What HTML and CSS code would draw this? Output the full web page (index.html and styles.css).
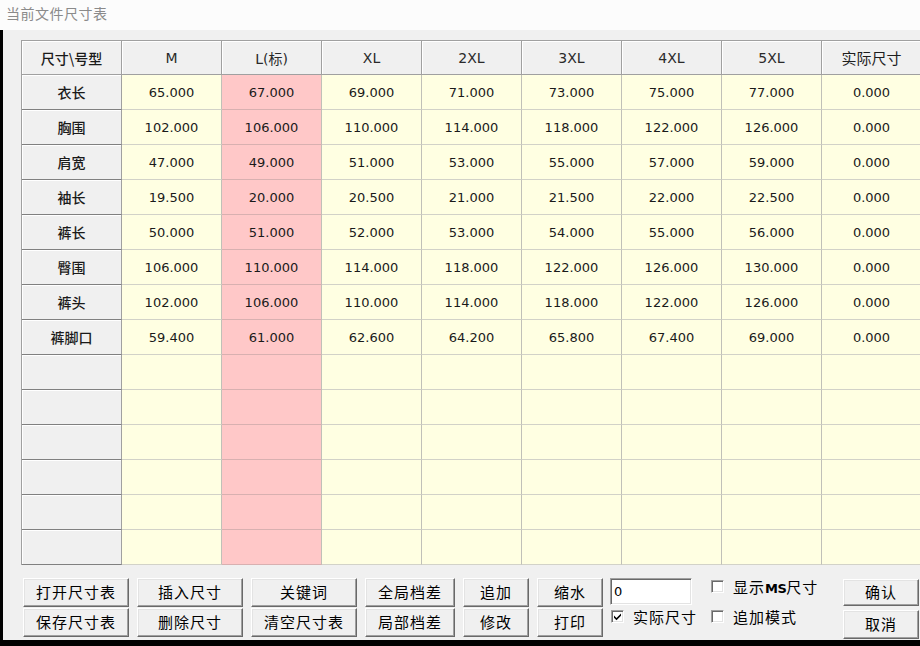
FILE: index.html
```html
<!DOCTYPE html>
<html lang="zh-CN">
<head>
<meta charset="utf-8">
<title>当前文件尺寸表</title>
<link rel="stylesheet" href="styles.css">
</head>
<body>
<div class="title">当前文件尺寸表</div>
<div class="frame">
  <div class="panel">
    <div class="grid-wrap">
      <div class="grid">
        <div class="hc corner">尺寸\号型</div>
        <div class="hc">M</div>
        <div class="hc">L(标)</div>
        <div class="hc">XL</div>
        <div class="hc">2XL</div>
        <div class="hc">3XL</div>
        <div class="hc">4XL</div>
        <div class="hc">5XL</div>
        <div class="hc cjk">实际尺寸</div>

        <div class="rh">衣长</div><div class="c">65.000</div><div class="c base">67.000</div><div class="c">69.000</div><div class="c">71.000</div><div class="c">73.000</div><div class="c">75.000</div><div class="c">77.000</div><div class="c">0.000</div>
        <div class="rh">胸围</div><div class="c">102.000</div><div class="c base">106.000</div><div class="c">110.000</div><div class="c">114.000</div><div class="c">118.000</div><div class="c">122.000</div><div class="c">126.000</div><div class="c">0.000</div>
        <div class="rh">肩宽</div><div class="c">47.000</div><div class="c base">49.000</div><div class="c">51.000</div><div class="c">53.000</div><div class="c">55.000</div><div class="c">57.000</div><div class="c">59.000</div><div class="c">0.000</div>
        <div class="rh">袖长</div><div class="c">19.500</div><div class="c base">20.000</div><div class="c">20.500</div><div class="c">21.000</div><div class="c">21.500</div><div class="c">22.000</div><div class="c">22.500</div><div class="c">0.000</div>
        <div class="rh">裤长</div><div class="c">50.000</div><div class="c base">51.000</div><div class="c">52.000</div><div class="c">53.000</div><div class="c">54.000</div><div class="c">55.000</div><div class="c">56.000</div><div class="c">0.000</div>
        <div class="rh">臀围</div><div class="c">106.000</div><div class="c base">110.000</div><div class="c">114.000</div><div class="c">118.000</div><div class="c">122.000</div><div class="c">126.000</div><div class="c">130.000</div><div class="c">0.000</div>
        <div class="rh">裤头</div><div class="c">102.000</div><div class="c base">106.000</div><div class="c">110.000</div><div class="c">114.000</div><div class="c">118.000</div><div class="c">122.000</div><div class="c">126.000</div><div class="c">0.000</div>
        <div class="rh">裤脚口</div><div class="c">59.400</div><div class="c base">61.000</div><div class="c">62.600</div><div class="c">64.200</div><div class="c">65.800</div><div class="c">67.400</div><div class="c">69.000</div><div class="c">0.000</div>

        <div class="rh"></div><div class="c"></div><div class="c base"></div><div class="c"></div><div class="c"></div><div class="c"></div><div class="c"></div><div class="c"></div><div class="c"></div>
        <div class="rh"></div><div class="c"></div><div class="c base"></div><div class="c"></div><div class="c"></div><div class="c"></div><div class="c"></div><div class="c"></div><div class="c"></div>
        <div class="rh"></div><div class="c"></div><div class="c base"></div><div class="c"></div><div class="c"></div><div class="c"></div><div class="c"></div><div class="c"></div><div class="c"></div>
        <div class="rh"></div><div class="c"></div><div class="c base"></div><div class="c"></div><div class="c"></div><div class="c"></div><div class="c"></div><div class="c"></div><div class="c"></div>
        <div class="rh"></div><div class="c"></div><div class="c base"></div><div class="c"></div><div class="c"></div><div class="c"></div><div class="c"></div><div class="c"></div><div class="c"></div>
        <div class="rh"></div><div class="c"></div><div class="c base"></div><div class="c"></div><div class="c"></div><div class="c"></div><div class="c"></div><div class="c"></div><div class="c"></div>
      </div>
    </div>

    <div class="toolbar">
      <div class="col w106">
        <button class="btn">打开尺寸表</button>
        <button class="btn">保存尺寸表</button>
      </div>
      <div class="col w106">
        <button class="btn">插入尺寸</button>
        <button class="btn">删除尺寸</button>
      </div>
      <div class="col w106">
        <button class="btn">关键词</button>
        <button class="btn">清空尺寸表</button>
      </div>
      <div class="col w90">
        <button class="btn">全局档差</button>
        <button class="btn">局部档差</button>
      </div>
      <div class="col w66">
        <button class="btn">追加</button>
        <button class="btn">修改</button>
      </div>
      <div class="col w66 last">
        <button class="btn">缩水</button>
        <button class="btn">打印</button>
      </div>
      <div class="col inputcol">
        <div class="textbox">0</div>
        <label class="chk chk-in"><span class="box checked"><svg viewBox="0 0 9 9" width="9" height="9"><path d="M1 3.5 L3.5 6 L8 1.5 L8 3.8 L3.5 8.3 L1 5.8 Z" fill="#000"/></svg></span><span class="lbl">实际尺寸</span></label>
      </div>
      <div class="col chkcol">
        <label class="chk chk-first"><span class="box"></span><span class="lbl">显示<b class="ms">MS</b>尺寸</span></label>
        <label class="chk chk-second"><span class="box"></span><span class="lbl">追加模式</span></label>
      </div>
      <div class="col okcol">
        <button class="btn ok">确认</button>
        <button class="btn cancel">取消</button>
      </div>
    </div>
  </div>
</div>
</body>
</html>
```

FILE: styles.css
```css
* { box-sizing: border-box; }

html, body {
  margin: 0;
  padding: 0;
  width: 920px;
  height: 646px;
  overflow: hidden;
  background: #000;
  font-family: "Noto Sans CJK SC", "Noto Sans", sans-serif;
}

.title {
  height: 30px;
  background: #fcfcfc;
  color: #8a8a8a;
  font-size: 14px;
  line-height: 27px;
  padding-left: 6px;
  letter-spacing: 0.5px;
}

.frame {
  height: 610px;
  padding-left: 3px;
}

.panel {
  height: 610px;
  background: #f0f0f0;
  padding-top: 10px;
  overflow: hidden;
}

.grid-wrap {
  margin-left: 18px;
  width: 1000px;
}

.grid {
  display: grid;
  grid-template-columns: repeat(9, 100px);
  grid-template-rows: 34px;
  grid-auto-rows: 35px;
  border-left: 1px solid #a0a0a0;
  border-top: 1px solid #a0a0a0;
  width: max-content;
}

.hc, .rh, .c {
  display: flex;
  align-items: center;
  justify-content: center;
  border-right: 1px solid #a0a0a0;
  border-bottom: 1px solid #a0a0a0;
  white-space: nowrap;
}

.hc {
  background: #f0f0f0;
  font-family: "DejaVu Sans", "Noto Sans CJK SC", sans-serif;
  font-size: 14px;
  color: #2a2a2a;
  box-shadow: inset 1px 1px 0 #ffffff;
}

.hc.cjk {
  font-family: "Noto Sans CJK SC", sans-serif;
  font-size: 15px;
  color: #1e1e1e;
}

.hc.corner, .rh {
  font-family: "Noto Sans CJK SC", sans-serif;
  font-size: 14px;
  font-weight: 500;
  color: #1a1a1a;
}

.rh {
  background: #f0f0f0;
  border-bottom-color: #808080;
  box-shadow: inset 1px 1px 0 #ffffff;
}

.c {
  background: #ffffe2;
  border-right-color: #c0c0b8;
  border-bottom-color: #d2d2c8;
  font-family: "DejaVu Sans", sans-serif;
  font-size: 13px;
  color: #1a1a1a;
}

.c.base {
  background: #ffc8c8;
  border-bottom-color: #d8b0b0;
}

.toolbar {
  display: flex;
  align-items: flex-start;
  margin-top: 13px;
  padding-left: 20px;
}

.col {
  display: flex;
  flex-direction: column;
  gap: 1px;
  margin-right: 8px;
}

.w106 { width: 106px; }
.w90 { width: 90px; }
.w66 { width: 66px; }
.col.last { margin-right: 7px; }

.btn {
  height: 29px;
  width: 100%;
  padding: 0 0 2px 0;
  margin: 0;
  background: #f0f0f0;
  border: 1px solid;
  border-color: #ffffff #696969 #696969 #ffffff;
  box-shadow: inset -1px -1px 0 #a0a0a0, inset 1px 1px 0 #e3e3e3;
  font-family: "Noto Sans CJK SC", sans-serif;
  font-size: 15px;
  letter-spacing: 1px;
  color: #000;
  line-height: 25px;
  white-space: nowrap;
}

.inputcol {
  width: 82px;
  margin-right: 18px;
  gap: 0;
}

.textbox {
  height: 27px;
  background: #fff;
  border: 1px solid;
  border-color: #a0a0a0 #ffffff #ffffff #a0a0a0;
  box-shadow: inset 1px 1px 0 #696969, inset -1px -1px 0 #e3e3e3;
  font-family: "DejaVu Sans", sans-serif;
  font-size: 13px;
  line-height: 25px;
  padding-left: 3px;
  color: #000;
}

.chk {
  display: flex;
  align-items: center;
  height: 20px;
  font-size: 15px;
  letter-spacing: 1px;
  color: #000;
  white-space: nowrap;
}

.chk-in { margin-top: 1px; }
.chkcol { width: 125px; gap: 0; }
.chk-first { margin-top: -2px; }
.chk-second { margin-top: 10px; }

.box {
  width: 13px;
  height: 13px;
  background: #fff;
  border: 1px solid;
  border-color: #a0a0a0 #ffffff #ffffff #a0a0a0;
  box-shadow: inset 1px 1px 0 #696969, inset -1px -1px 0 #e3e3e3;
  margin-right: 9px;
  margin-left: 1px;
  display: flex;
  align-items: center;
  justify-content: center;
  flex: none;
}

.box svg { display: block; }

.ms {
  font-family: "DejaVu Sans", sans-serif;
  font-weight: bold;
  font-size: 13px;
  letter-spacing: -0.5px;
}

.okcol {
  width: 76px;
  margin-right: 0;
}

.btn.ok { height: 27px; margin-top: 1px; line-height: 23px; }
.btn.cancel { margin-top: 3px; height: 29px; }
```
